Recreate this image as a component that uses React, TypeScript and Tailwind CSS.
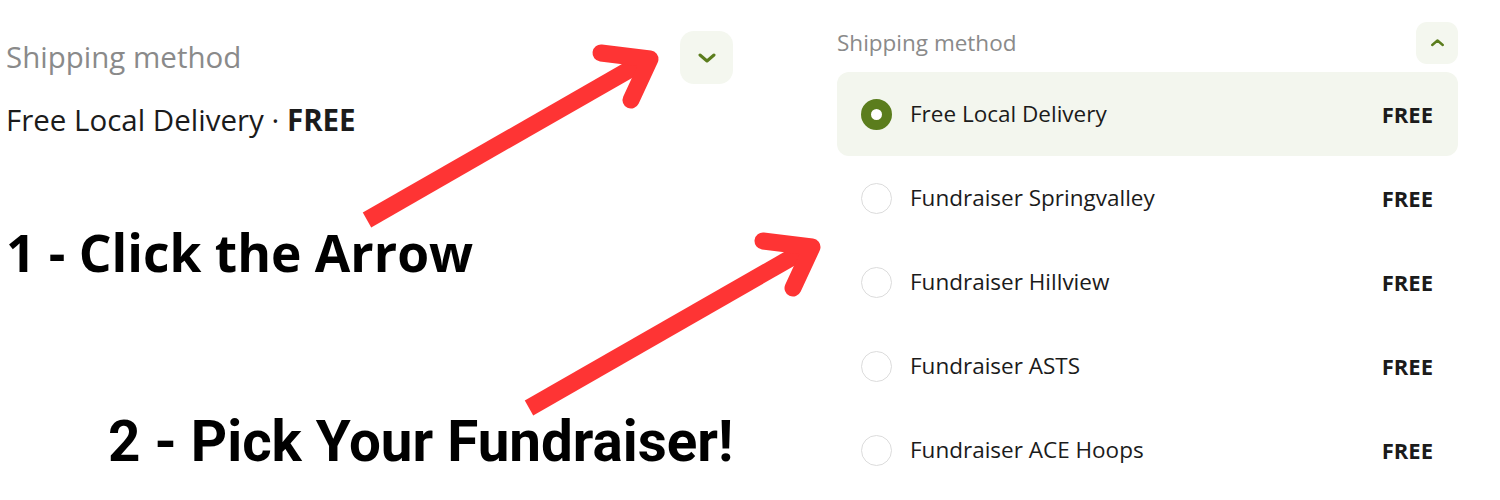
import React from 'react';

const options = [
    { id: 'local', name: 'Free Local Delivery', price: 'FREE' },
    { id: 'springvalley', name: 'Fundraiser Springvalley', price: 'FREE' },
    { id: 'hillview', name: 'Fundraiser Hillview', price: 'FREE' },
    { id: 'asts', name: 'Fundraiser ASTS', price: 'FREE' },
    { id: 'ace', name: 'Fundraiser ACE Hoops', price: 'FREE' }
];

const uiFont = { fontFamily: '"Open Sans", "Noto Sans", sans-serif' };

const Chevron: React.FC<{ up?: boolean; size: number }> = ({ up, size }) => (
    <svg width={size} height={size / 2} viewBox="0 0 20 10" fill="none">
        <path
            d={up ? 'M3 8 L10 2 L17 8' : 'M3 2 L10 8 L17 2'}
            stroke="#5b7d1d"
            strokeWidth={up ? 3.2 : 3}
            strokeLinecap="round"
            strokeLinejoin="round"
        />
    </svg>
);

// red arrows drawn over the whole picture
const Arrows = () => (
    <svg className="absolute inset-0 pointer-events-none" width="1500" height="500" viewBox="0 0 1500 500">
        {[0, 1].map(i => {
            const dx = i * 162;
            const dy = i * 188;
            return (
                <g key={i} transform={`translate(${dx} ${dy})`} stroke="#fe3434" strokeWidth="17" fill="none">
                    <line x1="367" y1="220" x2="648" y2="59" strokeLinecap="butt" />
                    <polyline points="601,53 650,59 631,100" strokeLinecap="round" strokeLinejoin="round" />
                </g>
            );
        })}
    </svg>
);

export default function App() {
    return (
        <div className="relative w-[1500px] h-[500px] bg-white overflow-hidden flex">
            {/* Collapsed state */}
            <div className="w-[727px] ml-[6px] flex flex-col" style={uiFont}>
                <div className="flex items-center justify-between mt-[31px]">
                    <span className="text-[29.5px] text-[#8a8a8a]">Shipping method</span>
                    <button className="w-[53px] h-[53px] rounded-[14px] bg-[#f4f7ef] flex items-center justify-center">
                        <Chevron size={20} />
                    </button>
                </div>
                <div className="mt-[16px] text-[29.5px] text-[#1b1b1b] leading-[40px] whitespace-nowrap">
                    Free Local Delivery · <span className="font-bold">FREE</span>
                </div>
                <h1
                    className="mt-[82px] text-[51.5px] font-bold text-black leading-[60px] whitespace-nowrap"
                    style={{ fontFamily: '"Open Sans", sans-serif' }}
                >
                    1 - Click the Arrow
                </h1>
                <h2
                    className="mt-[128px] ml-[102px] text-[56.5px] font-bold text-black leading-[64px] whitespace-nowrap"
                    style={{ fontFamily: 'Roboto, sans-serif' }}
                >
                    2 - Pick Your Fundraiser!
                </h2>
            </div>

            {/* Expanded state */}
            <div className="ml-[104px] w-[621px] flex flex-col" style={uiFont}>
                <div className="flex items-center justify-between mt-[22px] h-[42px]">
                    <span className="text-[22.5px] text-[#8a8a8a]">Shipping method</span>
                    <button className="w-[42px] h-[42px] rounded-[11px] bg-[#f4f7ef] flex items-center justify-center">
                        <Chevron up size={15} />
                    </button>
                </div>
                <div className="mt-[8px] flex flex-col">
                    {options.map((opt, i) => (
                        <div
                            key={opt.id}
                            className={`h-[84px] flex items-center pl-[24px] pr-[25px] rounded-[12px] ${i === 0 ? 'bg-[#f3f6ee]' : ''}`}
                        >
                            {i === 0 ? (
                                <span className="w-[31px] h-[31px] rounded-full border-[10px] border-[#5b7d1d] bg-white" />
                            ) : (
                                <span className="w-[31px] h-[31px] rounded-full border-[1.5px] border-[#dcdcdc] bg-white" />
                            )}
                            <span className="ml-[18px] flex-1 text-[22.5px] text-[#1b1b1b]">{opt.name}</span>
                            <span className="text-[22px] font-bold text-[#1b1b1b]">{opt.price}</span>
                        </div>
                    ))}
                </div>
            </div>

            <Arrows />
        </div>
    );
}
